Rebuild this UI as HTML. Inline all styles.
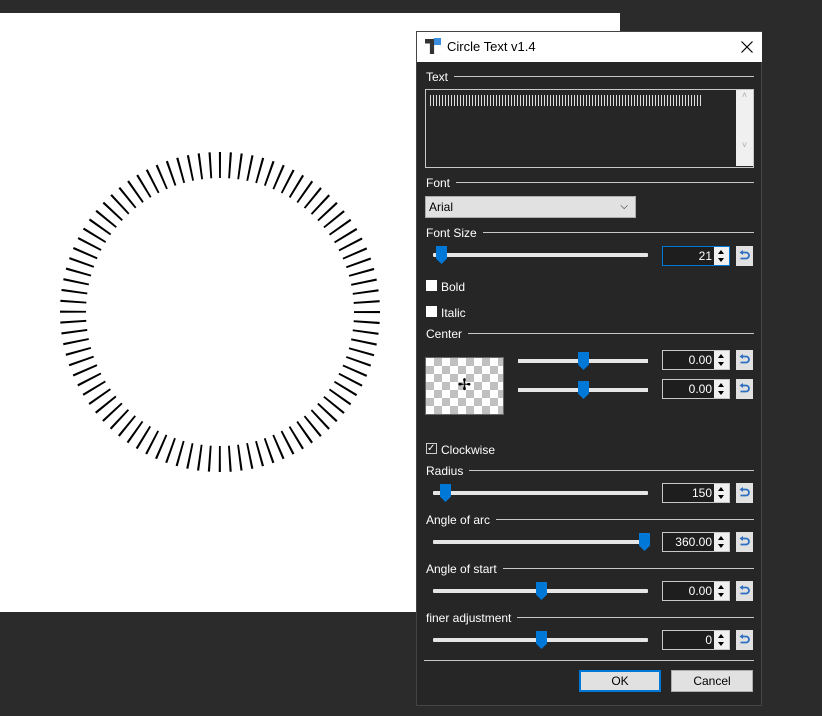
<!DOCTYPE html>
<html><head><style>
body{margin:0;width:822px;height:716px;background:#2b2b2b;position:relative;overflow:hidden;font-family:"Liberation Sans",sans-serif;font-size:12px;color:#fff}
.a{position:absolute}
.lbl{position:absolute;left:426px;height:14px;line-height:14px;background:#262626;padding-right:6px}
.ln{position:absolute;left:426px;width:328px;height:1px;background:#c8c8c8}
.tr{position:absolute;left:433px;width:215px;height:4px;background:#e6e6e6;border-radius:1px}
.th{position:absolute;width:11px;height:18px;background:#0078d7;clip-path:polygon(0 0,100% 0,100% 70%,50% 100%,0 70%)}
.nb{position:absolute;left:662px;width:66px;height:18px;border:1px solid #c8c8c8;background:#1e1e1e;text-align:right;line-height:18px}
.nb span{position:absolute;right:17px;top:0}
.sp{position:absolute;right:0;top:0;width:15px;height:18px;background:#f0f0f0}
.sp:before{content:"";position:absolute;left:4px;top:3px;border:3px solid transparent;border-bottom:4px solid #000;border-top:0}
.sp:after{content:"";position:absolute;left:4px;top:11px;border:3px solid transparent;border-top:4px solid #000;border-bottom:0}
.rb{position:absolute;left:736px;width:17px;height:20px;background:#e1e1e1}
.rb svg{position:absolute;left:3px;top:4px}
.cb{position:absolute;left:426px;width:11px;height:11px;background:#fff}
</style></head><body>
<div class="a" style="left:0;top:13px;width:620px;height:599px;background:#fff"></div>
<svg class="a" style="left:0;top:0" width="620" height="612">
<circle cx="220" cy="312" r="147" fill="none" stroke="#000" stroke-width="26" stroke-dasharray="2 8.04" transform="rotate(-90.4 220 312)"/>
</svg>
<div class="a" style="left:416px;top:31px;width:346px;height:675px;background:#262626;border:1px solid #444;box-sizing:border-box"></div>
<div class="a" style="left:417px;top:32px;width:345px;height:30px;background:#fff;color:#000;font-size:13px;line-height:30px">
<span class="a" style="left:8px;top:7px;width:14px;height:15px;background:#333;clip-path:polygon(0 0,100% 0,100% 30%,65% 30%,65% 100%,35% 100%,35% 30%,0 30%)"></span>
<span class="a" style="left:17px;top:6px;width:7px;height:7px;background:#3a8ee0"></span>
<span class="a" style="left:30px">Circle Text v1.4</span>
<svg class="a" style="left:324px;top:9px" width="12" height="12"><path d="M0.5 0.5L11.5 11.5M11.5 0.5L0.5 11.5" stroke="#000" stroke-width="1.2"/></svg></div>

<div class="ln" style="top:76px"></div><div class="lbl" style="top:70px">Text</div>
<div class="a" style="left:425px;top:89px;width:327px;height:77px;border:1px solid #c8c8c8;background:#262626"></div>
<div class="a" style="left:430px;top:95px;width:273px;height:11px;background:repeating-linear-gradient(90deg,#ddd 0 1px,transparent 1px 3px)"></div>
<div class="a" style="left:736px;top:90px;width:17px;height:76px;background:#f0f0f0;color:#aaa;font-size:9px;text-align:center">˄<br><br><br><br><br>˅</div>

<div class="ln" style="top:182px"></div><div class="lbl" style="top:176px">Font</div>
<div class="a" style="left:425px;top:196px;width:211px;height:22px;background:#e1e1e1;border:1px solid #adadad;box-sizing:border-box;color:#000;line-height:20px;padding-left:3px">Arial<span class="a" style="right:7px;top:0;font-size:10px">⌵</span></div>

<div class="ln" style="top:232px"></div><div class="lbl" style="top:226px">Font Size</div>
<div class="tr" style="top:253px"></div><div class="th" style="left:436px;top:246px"></div>
<div class="nb" style="top:246px;border-color:#0078d7"><span>21</span><div class="sp"></div></div><div class="rb" style="top:246px"></div>

<div class="cb" style="top:280px"></div><div class="a" style="left:441px;top:280px">Bold</div>
<div class="cb" style="top:306px"></div><div class="a" style="left:441px;top:306px">Italic</div>

<div class="ln" style="top:333px"></div><div class="lbl" style="top:327px">Center</div>
<div class="a" style="left:425px;top:357px;width:79px;height:58px;background-color:#fff;background-image:conic-gradient(#c0c0c0 25%,#fff 0 50%,#c0c0c0 0 75%,#fff 0);background-size:16px 16px;border:1px solid #666;box-sizing:border-box;color:#000;font-size:16px;text-align:center;line-height:56px">✢</div>
<div class="a" style="left:518px;top:359px;width:130px;height:4px;background:#e6e6e6"></div><div class="th" style="left:578px;top:352px"></div>
<div class="a" style="left:518px;top:388px;width:130px;height:4px;background:#e6e6e6"></div><div class="th" style="left:578px;top:381px"></div>
<div class="nb" style="top:350px"><span>0.00</span><div class="sp"></div></div><div class="rb" style="top:350px"></div>
<div class="nb" style="top:379px"><span>0.00</span><div class="sp"></div></div><div class="rb" style="top:379px"></div>

<div class="a" style="left:426px;top:443px;width:11px;height:11px;border:1px solid #ccc;box-sizing:border-box;font-size:10px;line-height:9px">✓</div><div class="a" style="left:441px;top:443px">Clockwise</div>

<div class="ln" style="top:470px"></div><div class="lbl" style="top:464px">Radius</div>
<div class="tr" style="top:491px"></div><div class="th" style="left:440px;top:484px"></div>
<div class="nb" style="top:483px"><span>150</span><div class="sp"></div></div><div class="rb" style="top:483px"></div>

<div class="ln" style="top:519px"></div><div class="lbl" style="top:513px">Angle of arc</div>
<div class="tr" style="top:540px"></div><div class="th" style="left:639px;top:533px"></div>
<div class="nb" style="top:532px"><span>360.00</span><div class="sp"></div></div><div class="rb" style="top:532px"></div>

<div class="ln" style="top:568px"></div><div class="lbl" style="top:562px">Angle of start</div>
<div class="tr" style="top:589px"></div><div class="th" style="left:536px;top:582px"></div>
<div class="nb" style="top:581px"><span>0.00</span><div class="sp"></div></div><div class="rb" style="top:581px"></div>

<div class="ln" style="top:617px"></div><div class="lbl" style="top:611px">finer adjustment</div>
<div class="tr" style="top:638px"></div><div class="th" style="left:536px;top:631px"></div>
<div class="nb" style="top:630px"><span>0</span><div class="sp"></div></div><div class="rb" style="top:630px"></div>

<div class="a" style="left:424px;top:660px;width:330px;height:1px;background:#c8c8c8"></div>
<div class="a" style="left:579px;top:670px;width:82px;height:22px;background:#e1e1e1;border:2px solid #0078d7;box-sizing:border-box;color:#000;text-align:center;line-height:18px">OK</div>
<div class="a" style="left:671px;top:670px;width:82px;height:22px;background:#e1e1e1;border:1px solid #adadad;box-sizing:border-box;color:#000;text-align:center;line-height:20px">Cancel</div>
<script>
document.querySelectorAll('.rb').forEach(function(e){e.innerHTML='<svg width="11" height="12"><path d="M3 2.5H7A3 3 0 0 1 7 8.5H1.5" fill="none" stroke="#2d6fc0" stroke-width="1.8"/><path d="M0.5 2.5L4 0V5Z" fill="#2d6fc0"/></svg>';});
</script>
</body></html>
